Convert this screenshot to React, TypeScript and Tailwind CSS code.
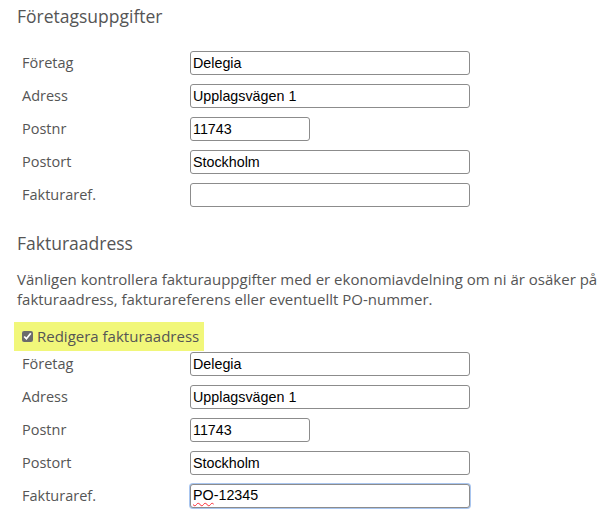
import React from "react";

const label = "pl-[5px] text-[14.5px] text-[#555] font-['Open_Sans',sans-serif]";
const field =
  "h-6 rounded-[3px] border border-[#8c8c8c] bg-white px-[2px] text-[14.3px] text-black font-['Liberation_Sans',Arial,sans-serif] outline-none";

type Row = { name: string; value: string; short?: boolean; focus?: boolean };

function FormRows({ rows }: { rows: Row[] }) {
  return (
    <div className="flex flex-col gap-[9px]">
      {rows.map((r) => (
        <div key={r.name} className="grid grid-cols-[173px_1fr] items-center">
          <span className={label}>{r.name}</span>
          {r.focus ? (
            <div
              className={`${field} flex w-[280px] items-center border-[#6a9fe0] shadow-[0_0_0_1px_#a9c6f0]`}
            >
              <span className="underline decoration-wavy decoration-red-500 decoration-1 underline-offset-2">
                PO
              </span>
              <span>-12345</span>
            </div>
          ) : (
            <input
              readOnly
              defaultValue={r.value}
              className={`${field} ${r.short ? "w-[120px]" : "w-[280px]"}`}
            />
          )}
        </div>
      ))}
    </div>
  );
}

export default function App() {
  const company: Row[] = [
    { name: "Företag", value: "Delegia" },
    { name: "Adress", value: "Upplagsvägen 1" },
    { name: "Postnr", value: "11743", short: true },
    { name: "Postort", value: "Stockholm" },
    { name: "Fakturaref.", value: "" },
  ];
  const billing: Row[] = [
    { name: "Företag", value: "Delegia" },
    { name: "Adress", value: "Upplagsvägen 1" },
    { name: "Postnr", value: "11743", short: true },
    { name: "Postort", value: "Stockholm" },
    { name: "Fakturaref.", value: "PO-12345", focus: true },
  ];

  return (
    <div className="h-[522px] w-[615px] overflow-hidden bg-white px-[17px] pt-[3px] font-['Open_Sans',sans-serif] text-[#555]">
      <h2 className="text-[17.5px] leading-[26px]">Företagsuppgifter</h2>
      <div className="mt-[22px]">
        <FormRows rows={company} />
      </div>

      <h2 className="mt-[23px] text-[17.5px] leading-[26px]">Fakturaadress</h2>
      <p className="mt-[13px] text-[15px] leading-[20px]">
        Vänligen kontrollera fakturauppgifter med er ekonomiavdelning om ni är osäker på
        fakturaadress, fakturareferens eller eventuellt PO-nummer.
      </p>

      <label className="mt-[13px] ml-[-3px] flex h-[29px] w-fit items-center gap-[4px] whitespace-nowrap bg-[#f1f77a] pl-[8px] pr-[5px] text-[15px]">
        <input type="checkbox" defaultChecked className="m-0 h-[11px] w-[11px] accent-[#6b6b6b]" />
        <span>Redigera fakturaadress</span>
      </label>
      <div className="mt-px">
        <FormRows rows={billing} />
      </div>
    </div>
  );
}
